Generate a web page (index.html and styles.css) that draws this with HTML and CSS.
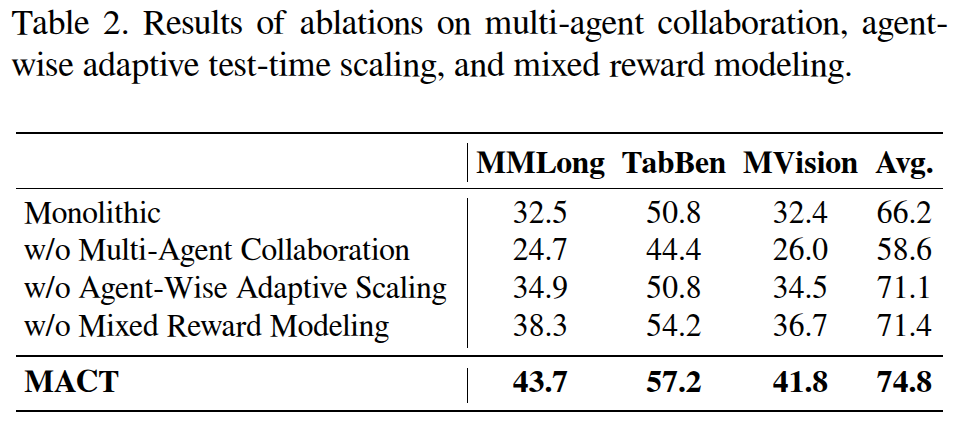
FILE: index.html
```html
<!DOCTYPE html>
<html lang="en">
<head>
<meta charset="utf-8">
<title>Font test</title>
<link rel="stylesheet" href="styles.css">
</head>
<body>
<div class="caption">
  <div class="t cap-first">Table 2. Results of ablations on multi-agent collaboration, agent-</div>
  <div class="t cap-second">wise adaptive test-time scaling, and mixed reward modeling.</div>
</div>
<div class="table">
  <div class="thead">
    <div class="row head-row">
      <div class="t cell name"></div>
      <div class="t cell num">MMLong</div>
      <div class="t cell num">TabBen</div>
      <div class="t cell num">MVision</div>
      <div class="t cell num">Avg.</div>
    </div>
  </div>
  <div class="tbody">
    <div class="row body-row">
      <div class="t cell name">Monolithic</div>
      <div class="t cell num">32.5</div>
      <div class="t cell num">50.8</div>
      <div class="t cell num">32.4</div>
      <div class="t cell num">66.2</div>
    </div>
    <div class="row body-row">
      <div class="t cell name">w/o Multi-Agent Collaboration</div>
      <div class="t cell num">24.7</div>
      <div class="t cell num">44.4</div>
      <div class="t cell num">26.0</div>
      <div class="t cell num">58.6</div>
    </div>
    <div class="row body-row">
      <div class="t cell name">w/o Agent-Wise Adaptive Scaling</div>
      <div class="t cell num">34.9</div>
      <div class="t cell num">50.8</div>
      <div class="t cell num">34.5</div>
      <div class="t cell num">71.1</div>
    </div>
    <div class="row body-row">
      <div class="t cell name">w/o Mixed Reward Modeling</div>
      <div class="t cell num">38.3</div>
      <div class="t cell num">54.2</div>
      <div class="t cell num">36.7</div>
      <div class="t cell num">71.4</div>
    </div>
  </div>
  <div class="tfoot">
    <div class="row foot-row">
      <div class="t cell name">MACT</div>
      <div class="t cell num">43.7</div>
      <div class="t cell num">57.2</div>
      <div class="t cell num">41.8</div>
      <div class="t cell num">74.8</div>
    </div>
  </div>
</div>
</body>
</html>
```
FILE: styles.css
```css
body {
  margin: 0;
  font-family: FreeSerif, Tinos, "Liberation Serif", serif;
}

.t {
  font-family: FreeSerif, Tinos, "Liberation Serif", serif;
}

.caption {
  margin-left: 11.5px;
  width: 936.5px;
  padding-top: 2.7px;
  font-size: 35.5px;
  line-height: 42.6px;
}

.cap-first {
  text-align: justify;
  text-align-last: justify;
}

.table {
  margin-top: 44.4px;
  margin-left: 16px;
  width: 927px;
  border-top: 2px solid black;
  font-size: 31.6px;
}

.thead {
  padding-top: 8.7px;
  padding-bottom: 6px;
  border-bottom: 1px solid black;
  font-weight: bold;
}

.tbody {
  padding-top: 8.6px;
  padding-bottom: 6.6px;
  border-bottom: 2px solid black;
}

.tfoot {
  padding-top: 11px;
  padding-bottom: 7px;
  border-bottom: 2px solid black;
  font-weight: bold;
}

.row {
  display: grid;
  grid-template-columns: 452px 145px 122px 131px 77px;
}

.name {
  box-sizing: border-box;
  padding-left: 8px;
  border-right: 1px solid black;
}

.num {
  text-align: center;
  white-space: nowrap;
  margin: 0 -20px;
}

.head-row .cell {
  padding-top: 3.8px;
  padding-bottom: 2.2px;
  line-height: 33px;
}

.body-row .cell {
  line-height: 31.7px;
  padding-bottom: 6px;
}

.foot-row .cell {
  line-height: 30px;
  padding-bottom: 5px;
}
```
